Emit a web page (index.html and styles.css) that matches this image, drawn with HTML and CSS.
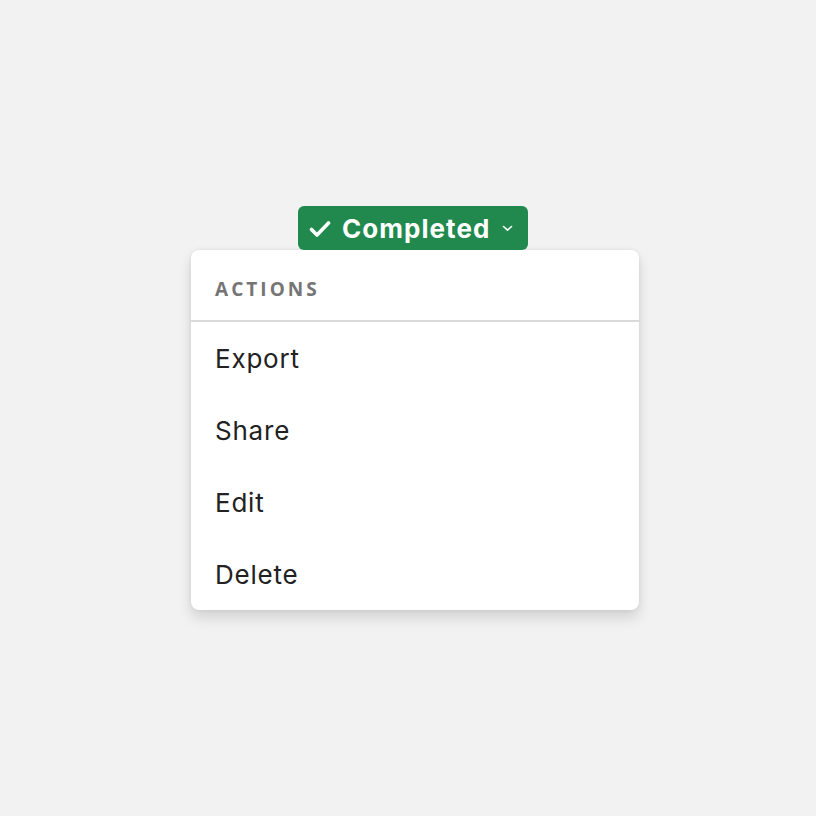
FILE: index.html
```html
<!DOCTYPE html>
<html>
<head>
<meta charset="utf-8">
<link rel="stylesheet" href="styles.css">
</head>
<body>
<div class="wrap">
  <button class="badge">
    <svg class="check" width="22" height="18" viewBox="0 0 22 18"><path d="M2.5 9.5 L8 15 L19.5 3" fill="none" stroke="#fff" stroke-width="3.6" stroke-linecap="round" stroke-linejoin="round"/></svg>
    <span class="label">Completed</span>
    <svg class="chev" width="11" height="7" viewBox="0 0 11 7"><path d="M1.5 1.5 L5.5 5.2 L9.5 1.5" fill="none" stroke="#fff" stroke-width="1.6" stroke-linecap="round" stroke-linejoin="round"/></svg>
  </button>
  <div class="menu">
    <div class="menu-head">ACTIONS</div>
    <div class="item">Export</div>
    <div class="item">Share</div>
    <div class="item">Edit</div>
    <div class="item">Delete</div>
  </div>
</div>
</body>
</html>
```
FILE: styles.css
```css
html, body { margin: 0; padding: 0; }
body {
  background: #f2f2f2;
  width: 816px;
  height: 816px;
  font-family: Inter, "Liberation Sans", sans-serif;
}
.wrap {
  padding-top: 206px;
  margin-left: 191px;
  width: 448px;
  display: flex;
  flex-direction: column;
}
.badge {
  margin-left: 107px;
  width: 230px;
  height: 44px;
  background: #21894d;
  border: none;
  border-radius: 6px;
  color: #fff;
  display: flex;
  align-items: center;
  padding: 0 0 0 11px;
  font-family: Inter, "Liberation Sans", sans-serif;
  font-weight: 700;
  font-size: 26px;
  position: relative;
  z-index: 1;
}
.check { margin-right: 11px; margin-top: 1px; }
.label { letter-spacing: 0.04em; }
.chev { margin-left: 12px; margin-top: 1px; }
.menu {
  background: #fff;
  border-radius: 8px;
  box-shadow: 0 8px 14px rgba(0,0,0,0.13), 0 0 4px rgba(0,0,0,0.08);
  margin-top: 0;
}
.menu-head {
  height: 72px;
  box-sizing: border-box;
  padding: 27px 0 0 24px;
  font-family: "Open Sans", sans-serif;
  font-weight: 700;
  font-size: 19px;
  letter-spacing: 0.16em;
  color: #757575;
  line-height: 24px;
  border-bottom: 2px solid #dadada;
}
.item {
  height: 72px;
  display: flex;
  align-items: center;
  padding-left: 24px;
  font-size: 26px;
  letter-spacing: 0.03em;
  color: #222;
}
```
